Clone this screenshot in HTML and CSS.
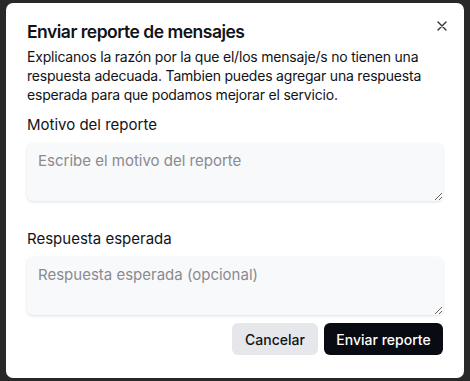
FILE: index.html
```html
<!DOCTYPE html>
<html lang="es">
<head>
  <meta charset="UTF-8">
  <meta name="viewport" content="width=device-width, initial-scale=1.0">
  <title>Enviar reporte</title>
  <link rel="stylesheet" href="styles.css">
</head>
<body>
  <div class="overlay">
    <div class="modal">
      <button class="close" aria-label="Cerrar">
        <svg width="10" height="10" viewBox="0 0 10 10">
          <path d="M1 1 L9 9 M9 1 L1 9" stroke="#333" stroke-width="1.4" stroke-linecap="round"/>
        </svg>
      </button>
      <h2 class="title">Enviar reporte de mensajes</h2>
      <p class="desc">Explicanos la razón por la que el/los mensaje/s no tienen una respuesta adecuada. Tambien puedes agregar una respuesta esperada para que podamos mejorar el servicio.</p>
      <div class="field">
        <label class="label">Motivo del reporte</label>
        <textarea class="input" placeholder="Escribe el motivo del reporte"></textarea>
      </div>
      <div class="field">
        <label class="label">Respuesta esperada</label>
        <textarea class="input" placeholder="Respuesta esperada (opcional)"></textarea>
      </div>
      <div class="actions">
        <button class="btn btn-light">Cancelar</button>
        <button class="btn btn-dark">Enviar reporte</button>
      </div>
    </div>
  </div>
</body>
</html>
```

FILE: styles.css
```css
*{
  box-sizing: border-box;
}
body{
  margin: 0;
  background: #282828;
  font-family: Inter, "Noto Sans", sans-serif;
  color: #111318;
}
.overlay{
  padding: 3px 6px 3px 6px;
  height: 381px;
}
.modal{
  position: relative;
  background: #fff;
  border-radius: 7px;
  padding: 17px 21px 21px 21px;
  height: 375px;
}
.close{
  position: absolute;
  top: 18px;
  right: 17px;
  border: none;
  background: none;
  padding: 0;
  width: 10px;
  height: 10px;
  display: flex;
}
.title{
  margin: 0;
  font-size: 17.5px;
  font-weight: 600;
  line-height: 24px;
  letter-spacing: -0.5px;
}
.desc{
  margin: 3px 0 0;
  font-size: 14px;
  line-height: 19px;
  letter-spacing: -0.2px;
}
.field{
  display: flex;
  flex-direction: column;
  gap: 8px;
  margin-top: 11px;
}
.field + .field{
  margin-top: 28px;
}
.label{
  font-size: 15px;
  line-height: 20px;
}
.input{
  height: 58px;
  width: 100%;
  border: none;
  border-radius: 6px;
  background: #f8f9fb;
  box-shadow: 0 1px 3px rgba(0,0,0,0.12);
  padding: 8px 11px;
  font-family: inherit;
  font-size: 15px;
  line-height: 20px;
  resize: vertical;
}
.input::placeholder{
  color: #8a8a8f;
}
.actions{
  display: flex;
  justify-content: flex-end;
  gap: 6px;
  margin-top: 8px;
}
.btn{
  height: 32px;
  border: none;
  border-radius: 6px;
  font-family: inherit;
  font-size: 14px;
  font-weight: 500;
  padding: 0;
  white-space: nowrap;
}
.btn-light{
  background: #e5e7eb;
  color: #111318;
  width: 86px;
}
.btn-dark{
  background: #090b12;
  color: #fff;
  width: 119px;
}
```
